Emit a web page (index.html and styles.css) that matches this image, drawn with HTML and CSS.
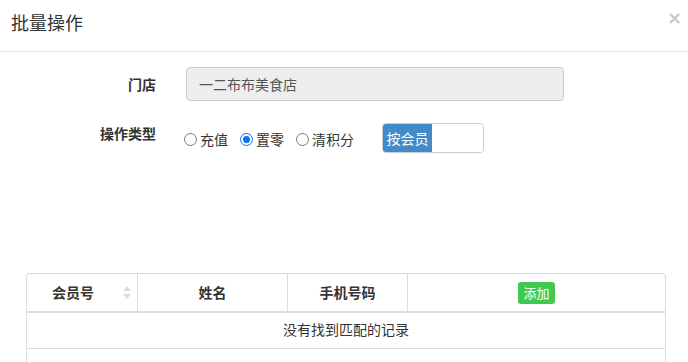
FILE: index.html
```html
<!DOCTYPE html>
<html lang="zh">
<head>
<meta charset="utf-8">
<link rel="stylesheet" href="styles.css">
</head>
<body>
<div class="modal">
  <div class="modal-header">
    <h4 class="title">批量操作</h4>
    <span class="close">×</span>
  </div>
  <div class="modal-body">
    <div class="form-row">
      <label class="label">门店</label>
      <div class="input">一二布布美食店</div>
    </div>
    <div class="form-row row-type">
      <label class="label label-type">操作类型</label>
      <div class="radios">
        <span class="radio"><span class="circle"></span>充值</span>
        <span class="radio"><span class="circle checked"></span>置零</span>
        <span class="radio"><span class="circle"></span>清积分</span>
      </div>
      <div class="toggle">
        <span class="toggle-on">按会员</span>
        <span class="toggle-off"></span>
      </div>
    </div>
    <div class="table">
      <div class="thead">
        <div class="th c1">会员号<span class="sort"><svg width="8" height="13" viewBox="0 0 8 13"><path d="M4 0 L8 5 L0 5 Z" fill="#dcdcdc"/><path d="M4 13 L8 8 L0 8 Z" fill="#dcdcdc"/></svg></span></div>
        <div class="th c2">姓名</div>
        <div class="th c3">手机号码</div>
        <div class="th c4"><span class="btn-add">添加</span></div>
      </div>
      <div class="empty">没有找到匹配的记录</div>
      <div class="row-last"></div>
    </div>
  </div>
</div>
</body>
</html>
```
FILE: styles.css
```css
* { box-sizing: border-box; }
body {
  margin: 0;
  background: #fff;
  font-family: "Microsoft YaHei", "Noto Sans CJK SC", "Noto Sans", sans-serif;
  font-size: 14px;
  color: #333;
}
.modal { width: 688px; height: 362px; overflow: hidden; }
.modal-header {
  height: 52px;
  border-bottom: 1px solid #e5e5e5;
  display: flex;
  justify-content: space-between;
  align-items: flex-start;
  padding: 0 11px;
}
.title {
  margin: 0;
  margin-top: 9px;
  font-size: 18px;
  font-weight: normal;
  line-height: 26px;
  color: #333;
}
.close {
  font-family: "DejaVu Sans", sans-serif;
  font-size: 18px;
  font-weight: bold;
  color: #c8c8c8;
  line-height: 18px;
  margin-top: 9px;
  margin-right: -5px;
}
.modal-body { padding: 15px 0 0 26px; }
.form-row {
  display: grid;
  grid-template-columns: 130px 378px;
  column-gap: 30px;
  align-items: center;
}
.label {
  text-align: right;
  font-weight: bold;
  color: #333;
}
.input {
  height: 34px;
  border: 1px solid #ccc;
  border-radius: 4px;
  background: #eee;
  color: #555;
  padding: 0 12px;
  line-height: 32px;
}
.row-type {
  grid-template-columns: 130px auto auto;
  justify-content: start;
  margin-top: 22px;
  column-gap: 0;
  align-items: start;
}
.label-type { margin-top: 0; line-height: 20px; }
.radios {
  display: flex;
  margin-left: 28px;
  margin-top: 6px;
  line-height: 20px;
}
.radio { display: flex; align-items: center; margin-right: 12px; }
.circle {
  width: 13px; height: 13px;
  border: 1px solid #767676;
  border-radius: 50%;
  margin: 0 3px 0 0;
  position: relative;
}
.circle.checked { border-color: #0075ff; }
.circle.checked::after {
  content: "";
  position: absolute;
  left: 2px; top: 2px;
  width: 7px; height: 7px;
  border-radius: 50%;
  background: #0075ff;
}
.toggle {
  margin-left: 16px;
  margin-top: 0;
  width: 102px;
  height: 30px;
  border: 1px solid #ccc;
  border-radius: 4px;
  display: flex;
  overflow: hidden;
}
.toggle-on {
  width: 49px;
  background: #428bca;
  color: #fff;
  line-height: 28px;
  text-align: center;
  font-size: 14px;
}
.toggle-off { flex: 1; background: #fff; }
.table {
  margin-top: 120px;
  width: 640px;
  border: 1px solid #ddd;
  border-bottom: none;
  border-radius: 4px 4px 0 0;
}
.thead {
  display: flex;
  height: 39px;
  border-bottom: 2px solid #ddd;
}
.th {
  font-weight: bold;
  text-align: center;
  line-height: 37px;
  border-right: 1px solid #ddd;
  position: relative;
}
.c1 { width: 111px; padding-right: 18px; }
.c2 { width: 150px; }
.c3 { width: 120px; }
.c4 { flex: 1; border-right: none; display: flex; align-items: center; justify-content: center; }
.sort { position: absolute; right: 6px; top: 12px; line-height: 0; }
.btn-add {
  background: #3fc94f;
  color: #fff;
  font-weight: normal;
  font-size: 13px;
  line-height: 22px;
  padding: 0 5px;
  border-radius: 3px;
  margin-top: 0;
}
.empty {
  height: 36px;
  line-height: 33px;
  text-align: center;
  border-bottom: 1px solid #ddd;
}
.row-last { height: 20px; }
```
